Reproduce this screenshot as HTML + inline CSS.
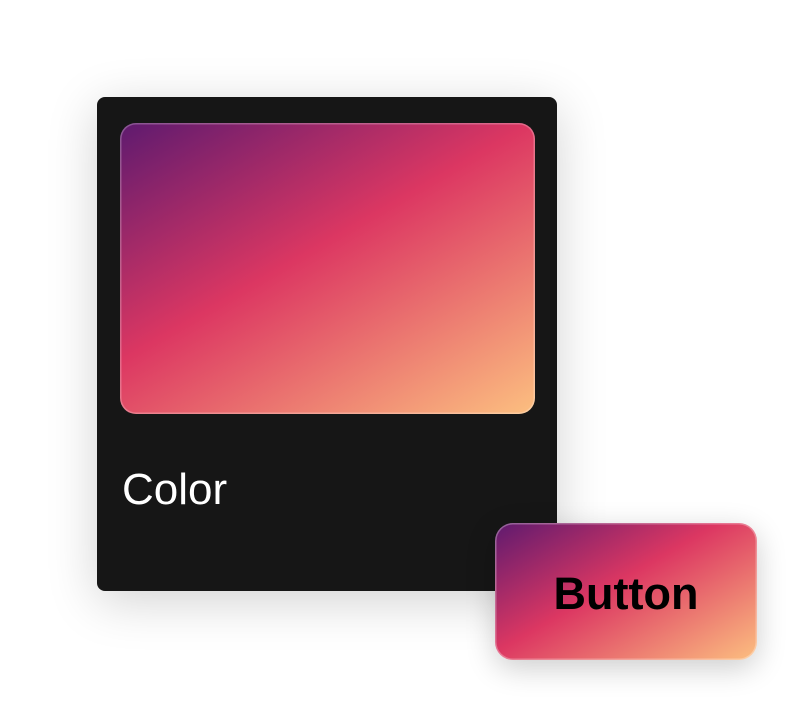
<!DOCTYPE html>
<html><head><style>
html,body{margin:0;width:800px;height:712px;background:#fff;overflow:hidden;font-family:"Liberation Sans",sans-serif}
.card{position:absolute;left:97px;top:97px;width:460px;height:494px;background:#161616;border-radius:8px;box-shadow:0 10px 50px rgba(0,0,0,.18)}
.g{background:linear-gradient(150deg,#5e1a6f 0%,#dc3762 45%,#fcbf80 100%)}
.panel{position:absolute;left:23px;top:26px;width:415px;height:291px;border-radius:16px;box-shadow:inset 0 0 0 1.5px rgba(255,255,255,.25)}
.lbl{position:absolute;left:25px;top:368px;color:#fff;font-size:44px}
.btn{position:absolute;left:495px;top:523px;width:262px;height:137px;border-radius:18px;box-shadow:inset 0 0 0 1.5px rgba(255,255,255,.3),0 8px 30px rgba(0,0,0,.2);display:flex;align-items:center;justify-content:center;font-weight:bold;font-size:45px;color:#000;padding-top:5px;box-sizing:border-box}
</style></head><body>
<div class="card"><div class="panel g"></div><div class="lbl">Color</div></div>
<div class="btn g">Button</div>
</body></html>
